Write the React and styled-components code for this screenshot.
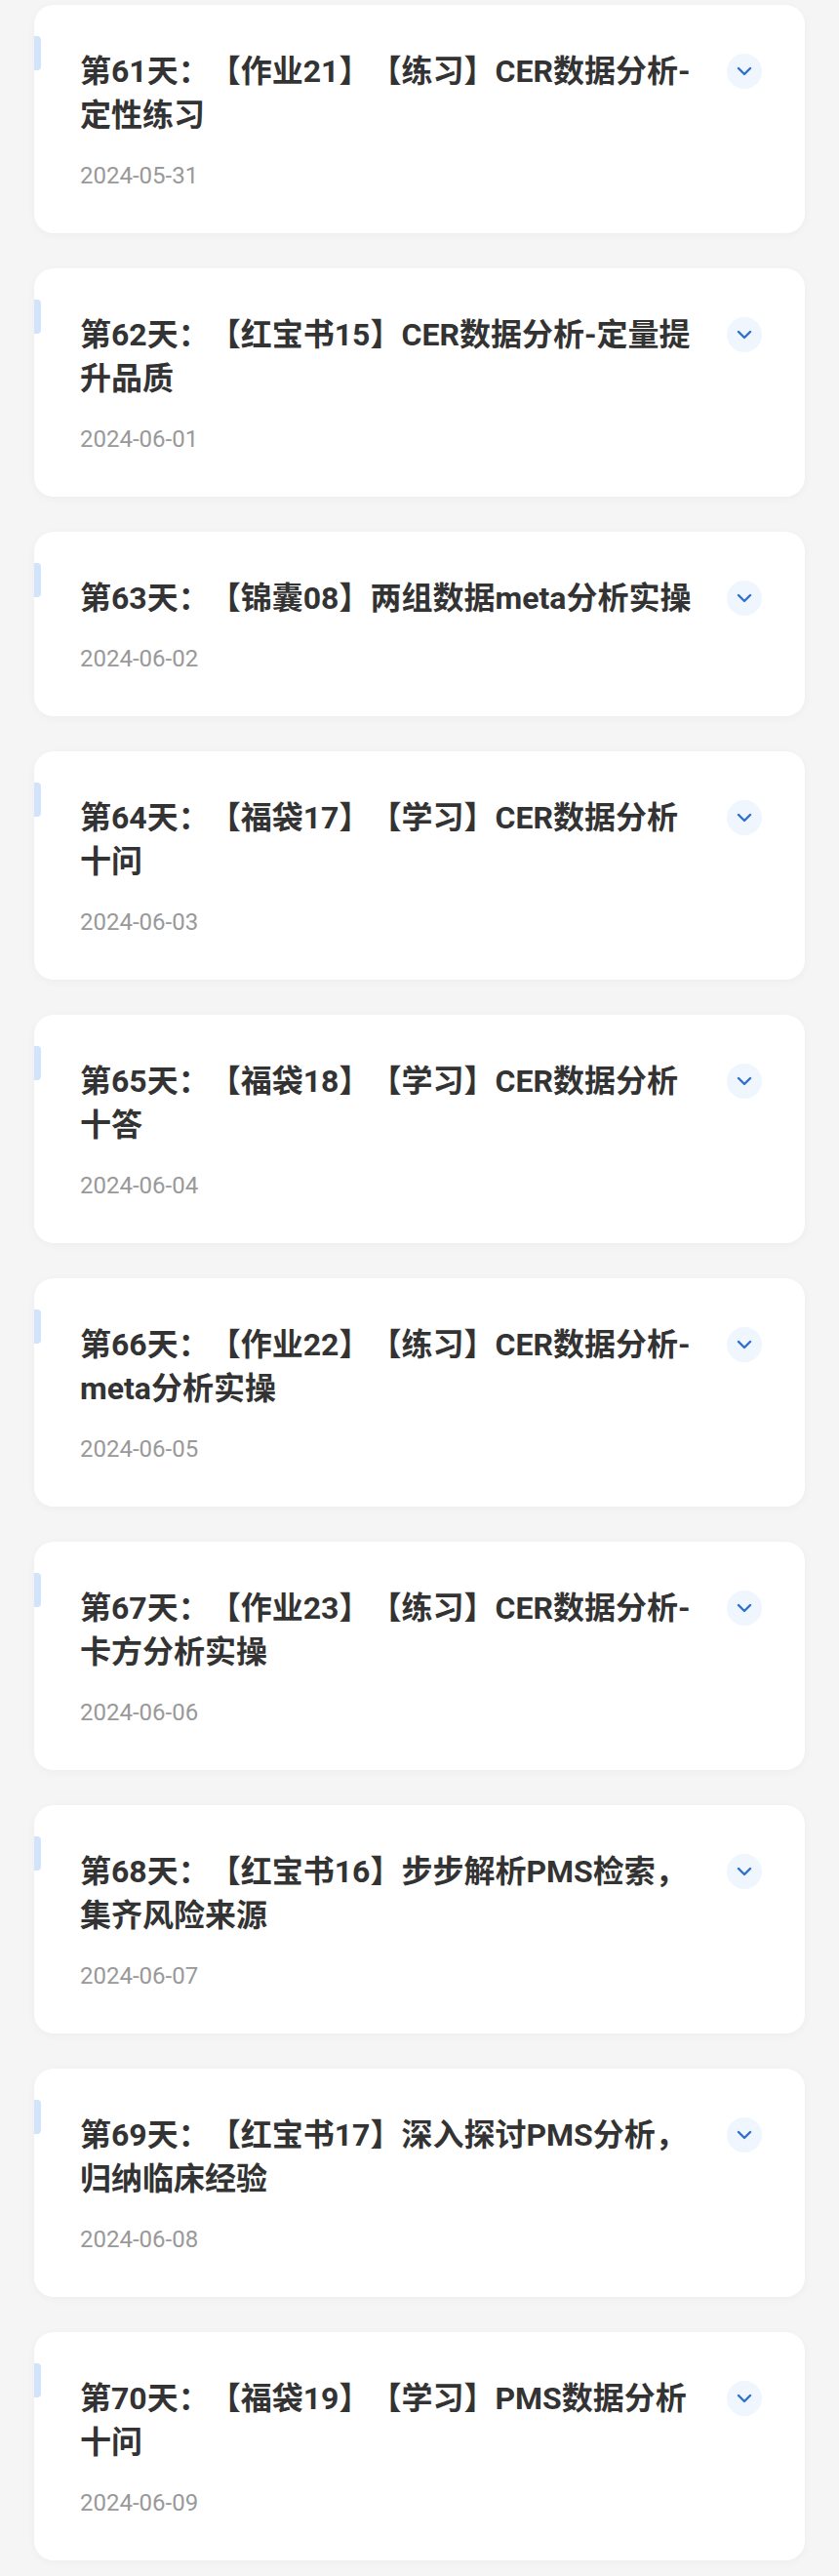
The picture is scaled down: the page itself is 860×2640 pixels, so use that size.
import React from 'react';
import styled, { createGlobalStyle } from 'styled-components';

const lessons = [
  { day: 61, title: '【作业21】【练习】CER数据分析-定性练习', date: '2024-05-31' },
  { day: 62, title: '【红宝书15】CER数据分析-定量提升品质', date: '2024-06-01' },
  { day: 63, title: '【锦囊08】两组数据meta分析实操', date: '2024-06-02' },
  { day: 64, title: '【福袋17】【学习】CER数据分析十问', date: '2024-06-03' },
  { day: 65, title: '【福袋18】【学习】CER数据分析十答', date: '2024-06-04' },
  { day: 66, title: '【作业22】【练习】CER数据分析-meta分析实操', date: '2024-06-05' },
  { day: 67, title: '【作业23】【练习】CER数据分析-卡方分析实操', date: '2024-06-06' },
  { day: 68, title: '【红宝书16】步步解析PMS检索，集齐风险来源', date: '2024-06-07' },
  { day: 69, title: '【红宝书17】深入探讨PMS分析，归纳临床经验', date: '2024-06-08' },
  { day: 70, title: '【福袋19】【学习】PMS数据分析十问', date: '2024-06-09' },
];

const GlobalStyle = createGlobalStyle`
  html, body {
    margin: 0;
    padding: 0;
    background: #f5f5f5;
    font-family: Roboto, "Noto Sans CJK SC", sans-serif;
  }
`;

const Chevron = () => (
  <svg width="16" height="10" viewBox="0 0 16 10" fill="none">
    <path d="M2 2 L8 8 L14 2" stroke="#2f6fcf" strokeWidth="2.4" strokeLinecap="round" strokeLinejoin="round" />
  </svg>
);

const App = () => {
  return (
    <>
      <GlobalStyle />
      <List>
        {lessons.map((item) => (
          <Card key={item.day}>
            <Header>
              <Title>{`第${item.day}天：${item.title}`}</Title>
              <ToggleButton>
                <Chevron />
              </ToggleButton>
            </Header>
            <DateText>{item.date}</DateText>
          </Card>
        ))}
      </List>
    </>
  );
};

const List = styled.div`
  display: flex;
  flex-direction: column;
  gap: 36px;
  padding: 5px 35px 16px;
`;

const Card = styled.div`
  position: relative;
  background: #ffffff;
  border-radius: 20px;
  box-shadow: 0 2px 10px rgba(0, 0, 0, 0.035);
  padding: 46px 44px 42px 47px;

  /* little blue tab on the left edge */
  &::before {
    content: '';
    position: absolute;
    left: 0;
    top: 32px;
    width: 7px;
    height: 35px;
    border-radius: 0 4px 4px 0;
    background: #d2e4fb;
  }
`;

const Header = styled.div`
  display: flex;
  align-items: flex-start;
  justify-content: space-between;
`;

const Title = styled.div`
  width: 638px;
  font-size: 32px;
  line-height: 45px;
  font-weight: 700;
  color: #333333;
  text-spacing-trim: space-all;
  line-break: strict;
`;

const ToggleButton = styled.div`
  width: 36px;
  height: 36px;
  margin-top: 4px;
  border-radius: 50%;
  background: #f0f6fe;
  display: flex;
  align-items: center;
  justify-content: center;
  flex-shrink: 0;
`;

const DateText = styled.div`
  margin-top: 22px;
  font-size: 24px;
  line-height: 34px;
  color: #999999;
`;

export default App;
